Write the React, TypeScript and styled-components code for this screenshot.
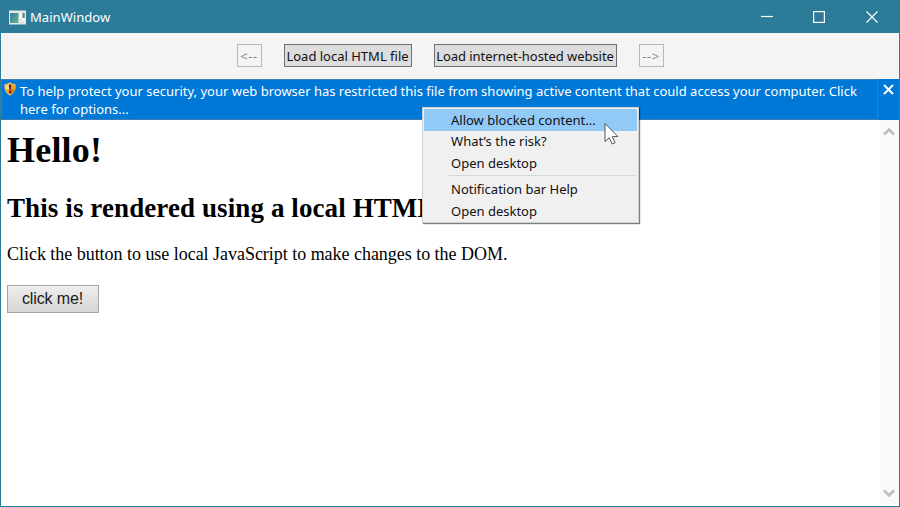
import React from "react";
import styled, { createGlobalStyle } from "styled-components";

const GlobalStyle = createGlobalStyle`
  * { box-sizing: border-box; }
  body { margin: 0; background: #fff; overflow: hidden; }
`;

const Window = styled.div`
  position: relative;
  display: flex;
  flex-direction: column;
  width: 900px;
  height: 507px;
  border: 1px solid #2c7c99;
  background: #fff;
  color: #111;
  font: 13px/18px "Noto Sans", "Open Sans", sans-serif;
`;

const TitleBar = styled.header`
  display: flex;
  align-items: center;
  flex: none;
  height: 32px;
  padding: 0 1px 0 8px;
  background: #2c7c99;
  color: #fff;
`;

const Title = styled.span`
  flex: 1;
  margin: 0 0 0 4px;
  letter-spacing: 0.05px;
`;

const CaptionButton = styled.button`
  display: flex;
  align-items: center;
  justify-content: center;
  width: 52.5px;
  height: 32px;
  padding: 0;
  border: 0;
  background: none;
`;

const Toolbar = styled.nav`
  display: flex;
  align-items: center;
  justify-content: center;
  flex: none;
  gap: 22px;
  height: 46px;
  border: 1px solid #fdfdfd;
  border-top: 0;
  background: #f4f4f4;
`;

const ToolButton = styled.button<{ $width: number; $spacing?: number }>`
  width: ${(p) => p.$width}px;
  height: 23px;
  padding: 0;
  border: 1px solid #707070;
  background: #dddddd;
  color: #111;
  font: inherit;
  line-height: 22px;
  letter-spacing: ${(p) => p.$spacing ?? 0}px;
  white-space: nowrap;

  &:disabled {
    border-color: #b4b9bd;
    background: #f4f4f4;
    color: #878787;
  }
`;

const NotificationBar = styled.section`
  display: flex;
  flex: none;
  height: 41px;
  background: #0078d7;
  color: #fff;
`;

const Notice = styled.div`
  display: flex;
  flex: 1;
  padding: 2px 0 0 2px;
  border: 1px solid #3c7db5;
`;

const NoticeText = styled.p`
  width: 850px;
  margin: 0 0 0 4px;
  line-height: 18px;
`;

const CloseNotice = styled.button`
  display: flex;
  justify-content: center;
  width: 21px;
  padding: 5px 0 0;
  border: 0;
  background: none;
`;

const Browser = styled.main`
  display: flex;
  flex: 1;
  min-height: 0;
`;

const Page = styled.article`
  flex: 1;
  padding: 9px 6px;
  color: #000;
  font-family: "Liberation Serif", serif;
`;

const Heading = styled.h1`
  margin: 0;
  font-size: 36px;
  line-height: 42px;
  letter-spacing: 0.2px;
`;

const Subheading = styled.h2`
  margin: 22px 0 0;
  font-size: 27px;
  line-height: 30px;
  letter-spacing: 0.1px;
`;

const Paragraph = styled.p`
  margin: 21px 0 0;
  font-size: 18px;
  line-height: 21px;
  letter-spacing: -0.03px;
`;

const PageButton = styled.button`
  width: 92px;
  height: 28px;
  margin: 20px 0 0 -0.5px;
  padding: 0;
  border: 1px solid #a5a5a5;
  background: linear-gradient(#eeeeee, #d6d6d6);
  color: #1a1a1a;
  font: 16px/26px "Liberation Sans", sans-serif;
  letter-spacing: -0.13px;
`;

const ScrollTrack = styled.aside`
  display: flex;
  flex-direction: column;
  align-items: center;
  justify-content: space-between;
  width: 19px;
  margin: 0 0 2px;
  padding: 7px 1px 6px 0;
  background: #f9f9f9;
`;

const ContextMenu = styled.ul`
  position: absolute;
  top: 106px;
  left: 421px;
  width: 217px;
  height: 116px;
  margin: 0;
  padding: 1px;
  border: 1px solid #d0d0d0;
  background: #f0f0f0;
  box-shadow: 1px 1px 1px rgba(0, 0, 0, 0.5);
  list-style: none;
`;

const MenuItem = styled.li<{ $active?: boolean; $spacing?: number }>`
  height: ${(p) => (p.$active ? 22 : 21.5)}px;
  padding-left: 27px;
  background: ${(p) => (p.$active ? "#91c9f7" : "transparent")};
  line-height: ${(p) => (p.$active ? 22 : 21)}px;
  letter-spacing: ${(p) => p.$spacing ?? 0}px;
`;

const MenuDivider = styled.li`
  height: 1px;
  margin: 1px 0 3px 25px;
  background: #d8d8d8;
`;

const Pointer = styled.svg`
  position: absolute;
  top: 121px;
  left: 603px;
`;

function AppIcon() {
  return (
    <svg width="17" height="15" viewBox="0 0 17 15">
      <defs>
        <linearGradient id="pane" x1="0" y1="0" x2="1" y2="1">
          <stop offset="0" stopColor="#357aa0" />
          <stop offset="1" stopColor="#69b884" />
        </linearGradient>
      </defs>
      <rect x="0" y="0.5" width="17" height="14" fill="#e5e8e8" />
      <rect x="1" y="3" width="8.5" height="10" fill="url(#pane)" />
      <rect x="10.5" y="3" width="5.5" height="9.5" fill="#f7f7f7" />
      <rect x="13.5" y="3" width="2.2" height="5" fill="#4b8b79" />
      <path d="M11 9.5h2M11 12h4" stroke="#c3cccc" />
    </svg>
  );
}

function ShieldIcon() {
  return (
    <svg width="12" height="14" viewBox="0 0 12 14">
      <path d="M6 .5C4.5 1.8 2.7 2.4.8 2.4.4 7 1.8 11.2 6 13.3 10.2 11.2 11.6 7 11.2 2.4 9.3 2.4 7.5 1.8 6 .5Z" fill="#f39b20" stroke="#d9c29a" strokeWidth=".8" />
      <path d="M6 1.2C4.7 2.3 3 2.9 1.4 3 1.2 5 1.5 6.6 2 8L6 7Z" fill="#ffd27a" />
      <path d="M6 7l4.5 1C9.8 10 8.3 11.8 6 12.8Z" fill="#d96d0c" />
      <path d="M4.9 2.8h2.2l-.5 5H5.4z" fill="#2a1a08" />
      <circle cx="6" cy="9.9" r="1.1" fill="#2a1a08" />
    </svg>
  );
}

function Chevron({ down = false }: { down?: boolean }) {
  return (
    <svg width="12" height="9" viewBox="0 0 12 9">
      <path d={down ? "M1 1.5 6 6.5 11 1.5" : "M1 7.5 6 2.5 11 7.5"} fill="none" stroke="#bdbdbd" strokeWidth="2.6" />
    </svg>
  );
}

export default function App() {
  return (
    <>
      <GlobalStyle />
      <Window>
        <TitleBar>
          <AppIcon />
          <Title>MainWindow</Title>
          <CaptionButton aria-label="Minimize">
            <svg width="12" height="12"><path d="M0 5.5h12" stroke="#fff" strokeWidth="1.2" /></svg>
          </CaptionButton>
          <CaptionButton aria-label="Maximize">
            <svg width="12" height="12"><rect x=".6" y=".6" width="10.8" height="10.8" fill="none" stroke="#fff" strokeWidth="1.2" /></svg>
          </CaptionButton>
          <CaptionButton aria-label="Close">
            <svg width="12" height="12"><path d="M.5.5l11 11m0-11-11 11" stroke="#fff" strokeWidth="1.2" /></svg>
          </CaptionButton>
        </TitleBar>

        <Toolbar>
          <ToolButton $width={25} $spacing={0.5} disabled>{"<--"}</ToolButton>
          <ToolButton $width={128}>Load local HTML file</ToolButton>
          <ToolButton $width={183} $spacing={-0.05}>Load internet-hosted website</ToolButton>
          <ToolButton $width={25} $spacing={0.5} disabled>{"-->"}</ToolButton>
        </Toolbar>

        <NotificationBar>
          <Notice>
            <ShieldIcon />
            <NoticeText>
              To help protect your security, your web browser has restricted this file from showing active content that could access your computer. Click here for options...
            </NoticeText>
          </Notice>
          <CloseNotice aria-label="Close notification">
            <svg width="11" height="11"><path d="M1 1l9 9m0-9-9 9" stroke="#fff" strokeWidth="2" /></svg>
          </CloseNotice>
        </NotificationBar>

        <Browser>
          <Page>
            <Heading>Hello!</Heading>
            <Subheading>This is rendered using a local HTML file.</Subheading>
            <Paragraph>Click the button to use local JavaScript to make changes to the DOM.</Paragraph>
            <PageButton>click me!</PageButton>
          </Page>
          <ScrollTrack>
            <Chevron />
            <Chevron down />
          </ScrollTrack>
        </Browser>

        <ContextMenu>
          <MenuItem $active>Allow blocked content...</MenuItem>
          <MenuItem $spacing={0.06}>What’s the risk?</MenuItem>
          <MenuItem>Open desktop</MenuItem>
          <MenuDivider />
          <MenuItem>Notification bar Help</MenuItem>
          <MenuItem>Open desktop</MenuItem>
        </ContextMenu>
        <Pointer width="16" height="24" viewBox="0 0 16 24">
          <path d="M1 1.5v18.2l4.2-4 3 6.3 2.9-1.3-2.9-6.1h5.7Z" fill="#fff" stroke="#555" strokeWidth="1" />
        </Pointer>
      </Window>
    </>
  );
}
